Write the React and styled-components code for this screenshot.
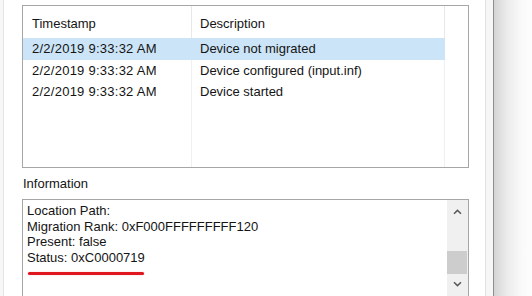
import React from "react";
import styled, { createGlobalStyle } from "styled-components";

const Global = createGlobalStyle`
  html, body { margin: 0; padding: 0; background: #ffffff; }
  body { font-family: "Liberation Sans", Arial, sans-serif; }
`;

const Page = styled.div`
  display: flex;
  width: 532px;
  height: 296px;
  overflow: hidden;
  background: #ffffff;
  font-family: "Liberation Sans", Arial, sans-serif;
  font-size: 13px;
  color: #141414;
`;

const LeftEdge = styled.div`
  flex: 0 0 3px;
  background: #f7f7f7;
  border-right: 1px solid #e4e4e4;
`;

const Content = styled.div`
  flex: 0 0 447px;
  margin-left: 18px;
  padding-top: 5px;
  display: flex;
  flex-direction: column;
`;

const ListBox = styled.div`
  box-sizing: border-box;
  flex: 0 0 163px;
  height: 163px;
  border: 1px solid #a6a6a6;
  display: grid;
  grid-template-columns: 169px 253px 1fr;
  grid-template-rows: 32px repeat(3, 21.5px) 1fr;
`;

const HeaderCell = styled.div`
  display: flex;
  align-items: center;
  padding-top: 2px;
  padding-left: ${(p) => p.$pad}px;
  border-right: 1px solid ${(p) => (p.$last ? "transparent" : "#e8e8e8")};
`;

const Cell = styled.div`
  display: flex;
  align-items: center;
  white-space: nowrap;
  padding-left: ${(p) => p.$pad}px;
  letter-spacing: ${(p) => (p.$wide ? "0.25px" : "0")};
  background: ${(p) => (p.$selected ? "#cce4f7" : "transparent")};
  border-right: 1px solid ${(p) => (p.$selected ? "#cce4f7" : p.$line ? "#f0f0f0" : "transparent")};
`;

const ColumnFill = styled.div`
  border-right: 1px solid ${(p) => (p.$line ? "#f0f0f0" : "transparent")};
`;

const Label = styled.div`
  flex: 0 0 16px;
  margin-top: 8px;
  margin-bottom: 7px;
  line-height: 16px;
  padding-left: 1px;
`;

const InfoBox = styled.div`
  box-sizing: border-box;
  flex: 0 0 120px;
  border: 1px solid #a6a6a6;
  display: flex;
`;

const InfoText = styled.div`
  flex: 1;
  padding: 3px 0 0 4px;
  line-height: 15.7px;
  white-space: nowrap;
`;

const Underline = styled.div`
  margin-top: 6px;
  margin-left: 1px;
  width: 116px;
  height: 3px;
  border-radius: 2px;
  background: #e0171f;
  box-shadow: 0 0 1px rgba(224, 23, 31, 0.5);
`;

const ScrollBar = styled.div`
  flex: 0 0 21px;
  background: #f0f0f0;
  display: flex;
  flex-direction: column;
`;

const ScrollButton = styled.div`
  height: ${(p) => p.$h}px;
  display: flex;
  align-items: center;
  justify-content: center;
  flex: 0 0 auto;
`;

const Track = styled.div`
  flex: 0 0 27px;
`;

const Thumb = styled.div`
  flex: 0 0 23px;
  margin-right: 1px;
  background: #cdcdcd;
`;

const RightFrame = styled.div`
  flex: 1;
  margin-left: 16px;
  display: flex;
`;

const Sash = styled.div`
  flex: 0 0 7px;
  background: #f6f6f6;
  border-left: 1px solid #e2e2e2;
  border-right: 1px solid #8f8f8f;
`;

const Shadow = styled.div`
  flex: 1;
  background: linear-gradient(to right, #d4d4d4 0%, #ececec 35%, #fafafa 75%, #fdfdfd 100%);
`;

const Chevron = ({ down }) => (
  <svg width="9" height="6" viewBox="0 0 9 6">
    <path
      d={down ? "M1 1.2 L4.5 4.6 L8 1.2" : "M1 4.8 L4.5 1.4 L8 4.8"}
      fill="none"
      stroke="#5a5a5a"
      strokeWidth="1.5"
    />
  </svg>
);

const rows = [
  { time: "2/2/2019 9:33:32 AM", desc: "Device not migrated", selected: true },
  { time: "2/2/2019 9:33:32 AM", desc: "Device configured (input.inf)" },
  { time: "2/2/2019 9:33:32 AM", desc: "Device started" },
];

export default function App() {
  return (
    <>
      <Global />
      <Page>
        <LeftEdge />
        <Content>
          <ListBox>
            <HeaderCell $pad={9}>Timestamp</HeaderCell>
            <HeaderCell $pad={8}>Description</HeaderCell>
            <HeaderCell $last />
            {rows.map((r, i) => (
              <React.Fragment key={i}>
                <Cell $pad={9} $wide $selected={r.selected} $line>
                  {r.time}
                </Cell>
                <Cell $pad={8} $selected={r.selected} $line>
                  {r.desc}
                </Cell>
                <Cell />
              </React.Fragment>
            ))}
            <ColumnFill $line />
            <ColumnFill $line />
            <ColumnFill />
          </ListBox>
          <Label>Information</Label>
          <InfoBox>
            <InfoText>
              <div>Location Path:</div>
              <div>Migration Rank: 0xF000FFFFFFFFF120</div>
              <div>Present: false</div>
              <div>Status: 0xC0000719</div>
              <Underline />
            </InfoText>
            <ScrollBar>
              <ScrollButton $h={24}>
                <Chevron />
              </ScrollButton>
              <Track />
              <Thumb />
              <ScrollButton $h={20}>
                <Chevron down />
              </ScrollButton>
            </ScrollBar>
          </InfoBox>
        </Content>
        <RightFrame>
          <Sash />
          <Shadow />
        </RightFrame>
      </Page>
    </>
  );
}
